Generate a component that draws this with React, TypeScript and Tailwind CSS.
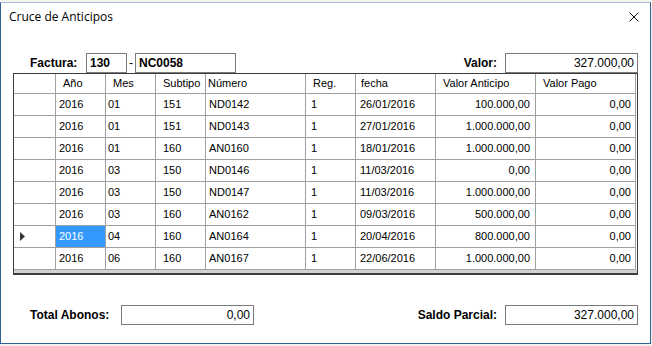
import React from "react";

const rows: string[][] = [
  ["2016", "01", "151", "ND0142", "1", "26/01/2016", "100.000,00", "0,00"],
  ["2016", "01", "151", "ND0143", "1", "27/01/2016", "1.000.000,00", "0,00"],
  ["2016", "01", "160", "AN0160", "1", "18/01/2016", "1.000.000,00", "0,00"],
  ["2016", "03", "150", "ND0146", "1", "11/03/2016", "0,00", "0,00"],
  ["2016", "03", "150", "ND0147", "1", "11/03/2016", "1.000.000,00", "0,00"],
  ["2016", "03", "160", "AN0162", "1", "09/03/2016", "500.000,00", "0,00"],
  ["2016", "04", "160", "AN0164", "1", "20/04/2016", "800.000,00", "0,00"],
  ["2016", "06", "160", "AN0167", "1", "22/06/2016", "1.000.000,00", "0,00"],
];

const headers = ["Año", "Mes", "Subtipo", "Número", "Reg.", "fecha", "Valor Anticipo", "Valor Pago"];

const headerPad = [
  "pl-[7px]",
  "pl-[7px]",
  "pl-[7px]",
  "pl-[2px]",
  "pl-[7px]",
  "pl-[5px]",
  "pl-[7px]",
  "pl-[7px]",
];

const cellPad = [
  "pl-[3px] justify-start",
  "pl-[2px] justify-start",
  "pl-[7px] justify-start",
  "pl-[3px] justify-start",
  "pl-[5px] justify-start",
  "pl-[4px] justify-start",
  "pr-[5px] justify-end",
  "pr-[4px] justify-end",
];

const labelCls = "text-[12px] font-bold text-black";

function Box({ w, children, right, bold }: { w: string; children: React.ReactNode; right?: boolean; bold?: boolean }) {
  return (
    <div
      className={`${w} h-[20px] border border-[#7a7a7a] bg-white flex items-center text-[12px] text-black ${
        right ? "justify-end pr-[3px]" : "justify-start pl-[3px]"
      } ${bold ? "font-bold" : ""}`}
    >
      {children}
    </div>
  );
}

export default function App() {
  return (
    <div className="w-[652px] h-[346px] bg-[#f2f2f2] overflow-hidden flex flex-col font-['Liberation_Sans',Arial,sans-serif]">
      <div className="h-[2px] bg-[#f4f3ee]" />
      <div className="w-[651px] h-[342px] bg-white border border-[#2f6290] border-t-[#aac0d6] flex flex-col">
        {/* title bar */}
        <div className="h-[28px] flex items-center justify-between pl-[8px] pr-[10px]">
          <span className="text-[12px] text-black font-['Open_Sans',sans-serif] leading-none">Cruce de Anticipos</span>
          <svg width="12" height="12" viewBox="0 0 12 12">
            <path d="M1.5 1.5 L10.5 10.5 M10.5 1.5 L1.5 10.5" stroke="#111" strokeWidth="1" fill="none" />
          </svg>
        </div>
        {/* factura row */}
        <div className="mt-[22px] flex items-center pl-[29px] pr-[12px]">
          <div className={`w-[56px] ${labelCls}`}>Factura:</div>
          <Box w="w-[41px]" bold>
            130
          </Box>
          <div className="w-[8px] text-center text-[12px]">-</div>
          <Box w="w-[101px]" bold>
            NC0058
          </Box>
          <div className="flex-1" />
          <div className={`${labelCls} mr-[8px]`}>Valor:</div>
          <Box w="w-[133px]" right>
            327.000,00
          </Box>
        </div>
        {/* grid */}
        <div className="ml-[12px] w-[625px] border border-[#3c3c3c] border-b-2 bg-white text-[11px] text-black">
          <div className="grid grid-cols-[42px_50px_50px_50px_100px_50px_80px_100px_100px]">
            <div className="h-[20px] border-r border-b border-[#a0a0a0]" />
            {headers.map((h, i) => (
              <div key={h} className={`h-[20px] border-r border-b border-[#a0a0a0] flex items-center ${headerPad[i]}`}>
                {h}
              </div>
            ))}
            {rows.map((r, ri) => (
              <React.Fragment key={ri}>
                <div className="h-[22px] border-r border-b border-[#a0a0a0] flex items-center pl-[6px]">
                  {ri === 6 && (
                    <svg width="5" height="9" viewBox="0 0 5 9">
                      <path d="M0 0 L5 4.5 L0 9 Z" fill="#333" />
                    </svg>
                  )}
                </div>
                {r.map((c, ci) => {
                  const sel = ri === 6 && ci === 0;
                  return (
                    <div
                      key={ci}
                      className={`h-[22px] border-r border-b border-[#a0a0a0] flex items-center ${cellPad[ci]} ${
                        sel ? "bg-[#3399ff] text-white" : ""
                      }`}
                    >
                      {c}
                    </div>
                  );
                })}
              </React.Fragment>
            ))}
          </div>
          <div className="h-[3px] bg-[#d0d0d0]" />
        </div>
        {/* bottom row */}
        <div className="mt-[30px] flex items-center pl-[29px] pr-[12px]">
          <div className={`w-[91px] ${labelCls}`}>Total Abonos:</div>
          <Box w="w-[133px]" right>
            0,00
          </Box>
          <div className="flex-1" />
          <div className={`${labelCls} mr-[8px]`}>Saldo Parcial:</div>
          <Box w="w-[133px]" right>
            327.000,00
          </Box>
        </div>
      </div>
    </div>
  );
}
